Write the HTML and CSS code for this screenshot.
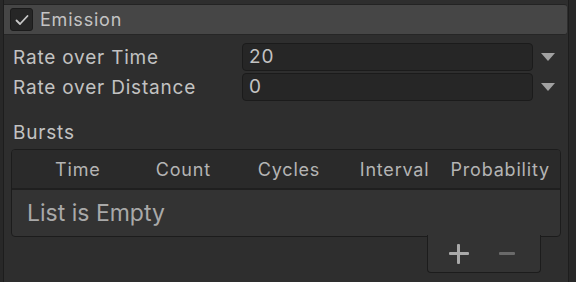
FILE: index.html
```html
<!DOCTYPE html>
<html lang="en">
<head>
<meta charset="UTF-8" />
<title>Emission</title>
<link rel="stylesheet" href="styles.css">
</head>
<body>
<div class="panel">
  <div class="module-header">
    <span class="checkbox">
      <svg width="16" height="16" viewBox="0 0 16 16"><path d="M2.5 8.5 L6 12 L13.5 4" fill="none" stroke="#c8c8c8" stroke-width="1.8" stroke-linecap="round" stroke-linejoin="round"/></svg>
    </span>
    <span class="module-title">Emission</span>
  </div>

  <div class="fields">
    <div class="field-row">
      <span class="label">Rate over Time</span>
      <span class="input">20</span>
      <span class="dropdown"></span>
    </div>
    <div class="field-row">
      <span class="label">Rate over Distance</span>
      <span class="input">0</span>
      <span class="dropdown"></span>
    </div>
  </div>

  <div class="bursts-label">Bursts</div>

  <div class="list">
    <div class="list-head">
      <span>Time</span>
      <span>Count</span>
      <span>Cycles</span>
      <span>Interval</span>
      <span>Probability</span>
    </div>
    <div class="list-body">List is Empty</div>
  </div>
  <div class="list-footer">
    <span class="btn-add"></span>
    <span class="btn-remove"></span>
  </div>
</div>
</body>
</html>
```

FILE: styles.css
```css
html, body {
  margin: 0; padding: 0;
  height: 100%;
  background: #282828;
  font-family: Inter, "Noto Sans", sans-serif;
  color: #c2c2c2;
  overflow: hidden;
}
.panel {
  margin-left: 3px;
  width: 564px;
  height: 282px;
  border-left: 1px solid #1d1d1d;
  border-right: 1px solid #1d1d1d;
  background: #2e2e2e;
  padding-top: 4px;
  box-sizing: content-box;
}
.module-header {
  display: flex;
  align-items: center;
  height: 31px;
  width: 563px;
  background: #464646;
  border-top: 1px solid #232323;
  border-bottom: 1px solid #262626;
  border-radius: 0 3px 3px 0;
  box-sizing: border-box;
  padding-left: 6px;
}
.checkbox {
  width: 23px;
  height: 23px;
  box-sizing: border-box;
  background: #262626;
  border: 1px solid #1b1b1b;
  border-radius: 3px;
  display: flex;
  align-items: center;
  justify-content: center;
}
.module-title {
  margin-left: 7px;
  font-size: 18px;
  letter-spacing: 0.8px;
  color: #c4c4c4;
}
.fields {
  display: flex;
  flex-direction: column;
  gap: 2px;
  margin-top: 8px;
}
.field-row {
  display: grid;
  grid-template-columns: 229px 291px 1fr;
  align-items: center;
  height: 28px;
  padding-left: 9px;
}
.label {
  font-size: 19px;
  letter-spacing: 0.8px;
  color: #c2c2c2;
}
.input {
  height: 28px;
  box-sizing: border-box;
  background: #262626;
  border: 1px solid #1b1b1b;
  border-radius: 4px;
  padding-left: 6px;
  font-size: 19px;
  letter-spacing: 0.8px;
  line-height: 26px;
  color: #c2c2c2;
}
.dropdown {
  justify-self: start;
  margin-left: 8px;
  width: 0; height: 0;
  border-left: 7px solid transparent;
  border-right: 7px solid transparent;
  border-top: 8px solid #a2a2a2;
}
.bursts-label {
  margin-top: 21px;
  padding-left: 9px;
  font-size: 19px;
  letter-spacing: 0.8px;
  line-height: 22px;
  color: #c2c2c2;
}
.list {
  margin: 5px 0 0 7px;
  width: 550px;
  height: 88px;
  box-sizing: border-box;
  border: 1px solid #1c1c1c;
  border-radius: 4px;
  background: #333333;
  overflow: hidden;
}
.list-head {
  display: grid;
  grid-template-columns: repeat(5, 1fr);
  height: 38px;
  padding: 0 7px 0 13px;
  align-items: center;
  justify-items: center;
  background: #2a2a2a;
  border-bottom: 2px solid #1f1f1f;
  font-size: 18px;
  letter-spacing: 0.8px;
  color: #b4b4b4;
}
.list-body {
  padding: 9px 0 0 15px;
  font-size: 23px;
  color: #a9a9a9;
}
.list-footer {
  position: relative;
  margin: -2px 0 0 423px;
  width: 114px;
  height: 38px;
  box-sizing: border-box;
  background: #333333;
  border: 1px solid #1c1c1c;
  border-top: none;
  border-radius: 0 0 4px 4px;
  display: flex;
  align-items: center;
  justify-content: center;
  gap: 30px;
  padding-right: 4px;
}
.btn-add, .btn-remove {
  position: relative;
  width: 20px;
  height: 20px;
}
.btn-add::before, .btn-add::after, .btn-remove::before {
  content: "";
  position: absolute;
  background: #a9a9a9;
  border-radius: 1px;
}
.btn-add::before { left: 0; top: 8px; width: 20px; height: 3px; }
.btn-add::after { left: 8px; top: 0; width: 3px; height: 20px; }
.btn-remove { width: 16px; }
.btn-remove::before { left: 0; top: 8px; width: 16px; height: 3px; background: #6a6a6a; }
```
